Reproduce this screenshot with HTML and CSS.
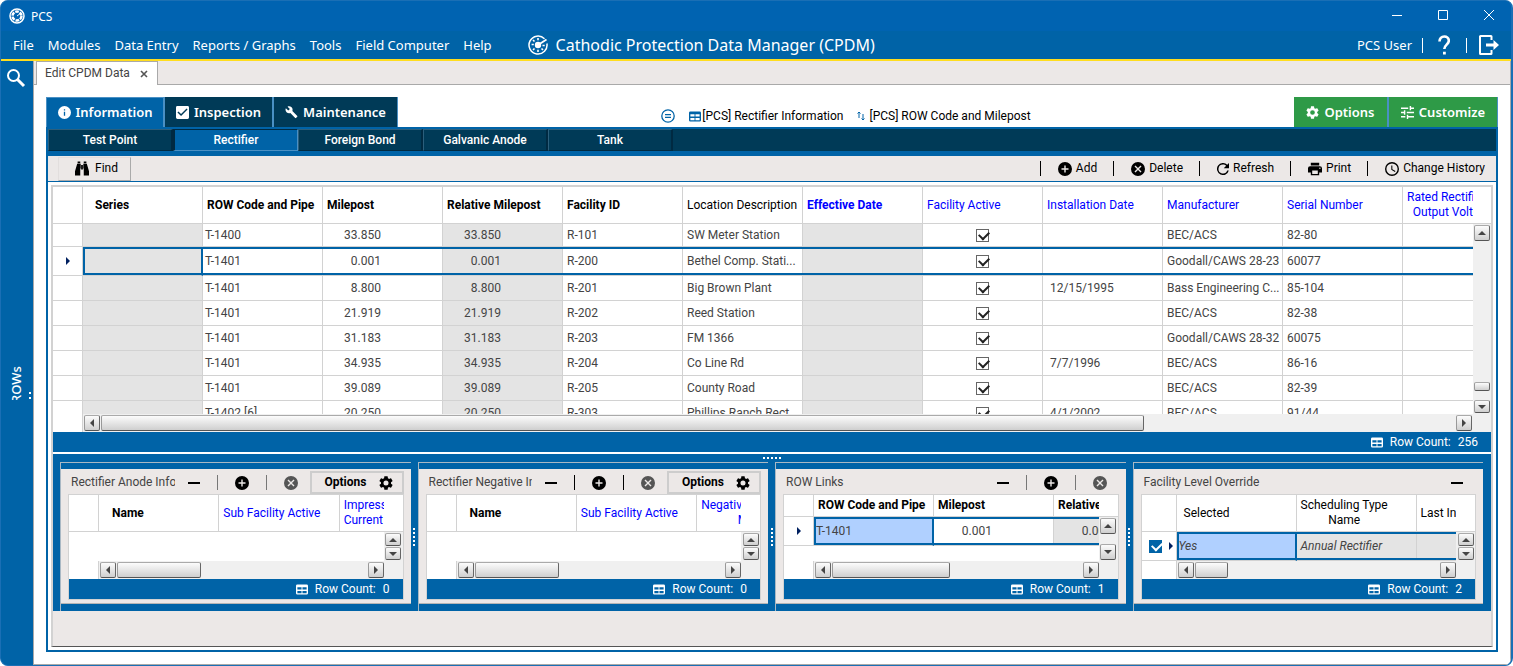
FILE: index.html
```html
<!DOCTYPE html>
<html lang="en">
<head>
    <meta charset="UTF-8">
    <meta name="viewport" content="width=device-width, initial-scale=1.0">
    <title>PCS</title>
    <link rel="stylesheet" href="styles.css">
</head>
<body>
    <!-- Shared icons -->
    <svg class="sprite" aria-hidden="true">
        <symbol id="i-search" viewBox="0 0 20 20"><circle cx="7.5" cy="7.5" r="5.5" fill="none" stroke="currentColor" stroke-width="2"/><path d="M11.5 11.5L18 18" stroke="currentColor" stroke-width="3"/></symbol>
        <symbol id="i-info" viewBox="2 2 20 20"><path d="M12 2a10 10 0 100 20 10 10 0 000-20zm1 15h-2v-6h2v6zm0-8h-2V7h2v2z"/></symbol>
        <symbol id="i-check" viewBox="3 3 18 18"><path d="M19 3H5a2 2 0 00-2 2v14a2 2 0 002 2h14a2 2 0 002-2V5a2 2 0 00-2-2zm-9 14l-5-5 1.4-1.4L10 14.2l7.600-7.600L19 8l-9 9z"/></symbol>
        <symbol id="i-wrench" viewBox="0 1 24 23"><path d="M22.700 19l-9.100-9.100c.9-2.300.4-5-1.500-6.900-2-2-5-2.400-7.400-1.300L9 6 6 9 1.600 4.700C.4 7.100.9 10.100 2.900 12.100c1.900 1.900 4.600 2.400 6.900 1.500l9.100 9.100c.4.4 1 .4 1.400 0l2.300-2.300c.5-.4.5-1.100.1-1.400z"/></symbol>
        <symbol id="i-gear" viewBox="2 2 20 20"><path d="M19.140 12.940c.04-.3.06-.61.06-.94s-.02-.64-.07-.94l2.030-1.580c.18-.14.23-.41.12-.61l-1.920-3.320c-.12-.22-.37-.29-.59-.22l-2.390.96c-.5-.38-1.030-.7-1.620-.94l-.36-2.540A.48.480 0 0013.920 2.400h-3.840c-.24 0-.43.17-.47.41l-.36 2.540c-.59.24-1.130.57-1.620.94l-2.390-.96c-.22-.08-.47 0-.59.22L2.740 8.870c-.12.21-.08.47.12.61l2.030 1.580c-.05.3-.09.63-.09.94s.02.64.07.94l-2.030 1.580c-.18.14-.23.41-.12.61l1.920 3.320c.12.22.37.29.59.22l2.390-.96c.5.38 1.030.7 1.620.94l.36 2.540c.05.24.24.41.48.41h3.840c.24 0 .44-.17.47-.41l.36-2.540c.59-.24 1.130-.56 1.620-.94l2.390.96c.22.08.47 0 .59-.22l1.920-3.320c.12-.22.07-.47-.12-.61zM12 15.600a3.600 3.600 0 110-7.200 3.600 3.600 0 010 7.200z"/></symbol>
        <symbol id="i-tune" viewBox="3 3 18 18"><path d="M3 17v2h6v-2H3zM3 5v2h10V5H3zm10 16v-2h8v-2h-8v-2h-2v6h2zM7 9v2H3v2h4v2h2V9H7zm14 4v-2H11v2h10zm-6-4h2V7h4V5h-4V3h-2v6z"/></symbol>
        <symbol id="i-add" viewBox="2 2 20 20"><path d="M12 2a10 10 0 100 20 10 10 0 000-20zm5 11h-4v4h-2v-4H7v-2h4V7h2v4h4v2z"/></symbol>
        <symbol id="i-cancel" viewBox="2 2 20 20"><path d="M12 2a10 10 0 100 20 10 10 0 000-20zm5 13.600L15.600 17 12 13.400 8.400 17 7 15.600l3.600-3.600L7 8.400 8.400 7l3.600 3.600L15.600 7 17 8.400 13.400 12l3.600 3.600z"/></symbol>
        <symbol id="i-refresh" viewBox="4 4 16 16"><path d="M17.650 6.350A8 8 0 1019.730 14h-2.080A6 6 0 1112 6c1.660 0 3.140.69 4.220 1.780L13 11h7V4l-2.350 2.350z"/></symbol>
        <symbol id="i-print" viewBox="2 2 20 20"><path d="M19 8H5a3 3 0 00-3 3v6h4v4h12v-4h4v-6a3 3 0 00-3-3zm-3 11H8v-5h8v5zm3-7a1 1 0 110-2 1 1 0 010 2zM18 3H6v4h12V3z"/></symbol>
        <symbol id="i-clock" viewBox="2 2 20 20"><path d="M12 2a10 10 0 100 20 10 10 0 000-20zm0 18a8 8 0 110-16 8 8 0 010 16zm.5-13H11v6l5.200 3.200.8-1.300-4.500-2.700V7z"/></symbol>
        <symbol id="i-find" viewBox="0 0 16 16"><path d="M3 0h3v2H3zM10 0h3v2h-3zM2.500 2.700H6.500V8H6V16H0V11zM13.500 2.700H9.500V8h.5v8h6v-5zM7 4h2v5H7z"/></symbol>
        <symbol id="i-table" viewBox="0 0 13 11"><path d="M1.500 0h10A1.500 1.500 0 0113 1.500v8A1.500 1.500 0 0111.500 11h-10A1.500 1.500 0 010 9.500v-8A1.500 1.500 0 011.500 0zM1.500 3v2.500H6V3zM7 3v2.500h4.500V3zM1.500 7v2.500H6V7zM7 7v2.500h4.500V7z"/></symbol>
        <symbol id="i-target" viewBox="0 0 20 20"><path d="M16.500 3.800A9 9 0 1018.900 8.500" fill="none" stroke="currentColor" stroke-width="1.500"/><circle cx="10" cy="10" r="3.200"/><path d="M10 10L18.500 4.500" stroke="currentColor" stroke-width="1.800"/><path d="M10 3v2.200M10 14.800V17M3.600 9.500h2.200M14.500 10.500h2.200M5 5l1.500 1.500M5 15l1.500-1.500M13.500 13.500L15 15" stroke="currentColor" stroke-width="1.600"/></symbol>
        <symbol id="i-exit" viewBox="0 0 20 20"><path d="M12.500 5V1.500a.5.5 0 00-.5-.5H1.500a.5.5 0 00-.5.500v17a.5.5 0 00.5.500H12a.5.5 0 00.5-.500V15" fill="none" stroke="currentColor" stroke-width="2"/><path d="M7 8.500h7.500V5l5.500 5-5.500 5v-3.500H7z"/></symbol>
        <symbol id="i-up" viewBox="0 0 8 4"><path d="M0 4L4 0l4 4z"/></symbol>
        <symbol id="i-down" viewBox="0 0 8 4"><path d="M0 0l4 4 4-4z"/></symbol>
        <symbol id="i-left" viewBox="0 0 4 8"><path d="M4 0L0 4l4 4z"/></symbol>
        <symbol id="i-right" viewBox="0 0 4 8"><path d="M0 0l4 4-4 4z"/></symbol>
    </svg>

    <div class="window">
        <header class="titlebar">
            <svg class="ic16" viewBox="0 0 16 16"><circle cx="8" cy="8" r="7" fill="none" stroke="currentColor" stroke-width="1.500"/><circle cx="8" cy="8" r="4.500" fill="none" stroke="currentColor" stroke-width="2.500" stroke-dasharray="3.700 1"/><path d="M8 8l4-3" stroke="currentColor"/></svg>
            <span class="app-name">PCS</span>
            <div class="win-buttons">
                <button aria-label="Minimize"><svg viewBox="0 0 10 10"><path d="M0 5.500h10"/></svg></button>
                <button aria-label="Maximize"><svg viewBox="0 0 10 10"><path d="M.5.5h9v9h-9z"/></svg></button>
                <button aria-label="Close"><svg viewBox="0 0 10 10"><path d="M0 0l10 10M10 0L0 10"/></svg></button>
            </div>
        </header>

        <nav class="menubar">
            <a href="#">File</a>
            <a href="#">Modules</a>
            <a href="#">Data Entry</a>
            <a href="#">Reports / Graphs</a>
            <a href="#">Tools</a>
            <a href="#">Field Computer</a>
            <a href="#">Help</a>
            <h1><svg class="ic20"><use href="#i-target"/></svg>Cathodic Protection Data Manager (CPDM)</h1>
            <div class="user">
                <span>PCS User</span>
                <i class="bar"></i>
                <button aria-label="Help"><svg class="help" viewBox="0 0 12 20"><path d="M1.500 6.500C1.500 3.500 3.500 1.500 6.200 1.500s4.600 1.600 4.600 4.300C10.800 9.500 6.300 9.800 6.300 14" fill="none" stroke="currentColor" stroke-width="2.600"/><path d="M5 16.800h2.800v2.800H5z"/></svg></button>
                <i class="bar"></i>
                <button aria-label="Log out"><svg class="ic20"><use href="#i-exit"/></svg></button>
            </div>
        </nav>

        <div class="workspace">
            <aside class="sidebar">
                <button aria-label="Search"><svg class="ic20"><use href="#i-search"/></svg></button>
                <span class="rows-label">ROWs</span>
                <span class="side-grip"></span>
            </aside>

            <main>
                <div class="doc-tabs">
                    <div class="doc-tab">Edit CPDM Data <button aria-label="Close tab"><svg viewBox="0 0 8 8"><path d="M1 1l6 6M7 1L1 7" stroke="#555" stroke-width="1.600"/></svg></button></div>
                </div>

                <div class="page">
                    <div class="main-tabs">
                        <button class="tab active"><svg class="ic13"><use href="#i-info"/></svg>Information</button>
                        <button class="tab inspection"><svg class="ic13"><use href="#i-check"/></svg>Inspection</button>
                        <button class="tab maintenance"><svg class="ic13"><use href="#i-wrench"/></svg>Maintenance</button>
                        <div class="layout-info">
                            <svg class="filter" viewBox="0 0 14 14"><circle cx="7" cy="7" r="6.200"/><path d="M4 5.700h6M4 8.300h6"/></svg>
                            <span><svg class="table-ic"><use href="#i-table"/></svg>[PCS] Rectifier Information</span>
                            <span class="sort"><svg viewBox="0 0 8 10"><path d="M2 7V1M.5 2.500L2 1l1.500 1.500M6 3v6M4.500 7.500L6 9l1.500-1.500"/></svg>[PCS] ROW Code and Milepost</span>
                        </div>
                        <button class="tab green options"><svg class="ic13"><use href="#i-gear"/></svg>Options</button>
                        <button class="tab green customize"><svg class="ic13"><use href="#i-tune"/></svg>Customize</button>
                    </div>

                    <div class="frame">
                        <div class="sub-tabs">
                            <button>Test Point</button>
                            <button class="active">Rectifier</button>
                            <button>Foreign Bond</button>
                            <button>Galvanic Anode</button>
                            <button>Tank</button>
                        </div>

                        <div class="toolbar">
                            <button class="find"><svg><use href="#i-find"/></svg>Find</button>
                            <i class="bar"></i>
                            <button><svg class="ic14"><use href="#i-add"/></svg>Add</button>
                            <i class="bar"></i>
                            <button><svg class="ic14"><use href="#i-cancel"/></svg>Delete</button>
                            <i class="bar"></i>
                            <button><svg class="ic12"><use href="#i-refresh"/></svg>Refresh</button>
                            <i class="bar"></i>
                            <button><svg class="ic14"><use href="#i-print"/></svg>Print</button>
                            <i class="bar"></i>
                            <button><svg class="ic14"><use href="#i-clock"/></svg>Change History</button>
                        </div>

                        <div class="content">
                            <section class="grid main-grid">
                                <div class="grid-view">
                                    <div class="viewport">
                                        <table>
                                            <colgroup><col class="c-head"><col span="11"><col></colgroup>
                                            <thead>
                                                <tr>
                                                    <th></th><th class="b indent">Series</th><th class="b">ROW Code and Pipe</th><th class="b">Milepost</th><th class="b">Relative Milepost</th><th class="b">Facility ID</th><th>Location Description</th><th class="b blue">Effective Date</th><th class="blue">Facility Active</th><th class="blue">Installation Date</th><th class="blue">Manufacturer</th><th class="blue">Serial Number</th><th class="blue"><span class="two">Rated Rectifier<br>Output Volts</span></th>
                                                </tr>
                                            </thead>
                                            <tbody>
                                                <tr class="first"><td></td><td class="ro"></td><td class="code">T-1400</td><td class="num">33.850</td><td class="num ro">33.850</td><td>R-101</td><td>SW Meter Station</td><td class="ro"></td><td class="tick"><input type="checkbox" aria-label="Facility active" checked></td><td class="date"></td><td>BEC/ACS</td><td>82-80</td><td></td></tr>
                                                <tr class="current"><td class="mark"><svg><use href="#i-right"/></svg></td><td class="ro focus"></td><td class="code">T-1401</td><td class="num">0.001</td><td class="num ro">0.001</td><td>R-200</td><td>Bethel Comp. Stati...</td><td class="ro"></td><td class="tick"><input type="checkbox" aria-label="Facility active" checked></td><td class="date"></td><td>Goodall/CAWS 28-23</td><td>60077</td><td></td></tr>
                                                <tr><td></td><td class="ro"></td><td class="code">T-1401</td><td class="num">8.800</td><td class="num ro">8.800</td><td>R-201</td><td>Big Brown Plant</td><td class="ro"></td><td class="tick"><input type="checkbox" aria-label="Facility active" checked></td><td class="date">12/15/1995</td><td>Bass Engineering C...</td><td>85-104</td><td></td></tr>
                                                <tr><td></td><td class="ro"></td><td class="code">T-1401</td><td class="num">21.919</td><td class="num ro">21.919</td><td>R-202</td><td>Reed Station</td><td class="ro"></td><td class="tick"><input type="checkbox" aria-label="Facility active" checked></td><td class="date"></td><td>BEC/ACS</td><td>82-38</td><td></td></tr>
                                                <tr><td></td><td class="ro"></td><td class="code">T-1401</td><td class="num">31.183</td><td class="num ro">31.183</td><td>R-203</td><td>FM 1366</td><td class="ro"></td><td class="tick"><input type="checkbox" aria-label="Facility active" checked></td><td class="date"></td><td>Goodall/CAWS 28-32</td><td>60075</td><td></td></tr>
                                                <tr><td></td><td class="ro"></td><td class="code">T-1401</td><td class="num">34.935</td><td class="num ro">34.935</td><td>R-204</td><td>Co Line Rd</td><td class="ro"></td><td class="tick"><input type="checkbox" aria-label="Facility active" checked></td><td class="date">7/7/1996</td><td>BEC/ACS</td><td>86-16</td><td></td></tr>
                                                <tr><td></td><td class="ro"></td><td class="code">T-1401</td><td class="num">39.089</td><td class="num ro">39.089</td><td>R-205</td><td>County Road</td><td class="ro"></td><td class="tick"><input type="checkbox" aria-label="Facility active" checked></td><td class="date"></td><td>BEC/ACS</td><td>82-39</td><td></td></tr>
                                                <tr><td></td><td class="ro"></td><td class="code">T-1402 [6]</td><td class="num">20.250</td><td class="num ro">20.250</td><td>R-303</td><td>Phillips Ranch Rect...</td><td class="ro"></td><td class="tick"><input type="checkbox" aria-label="Facility active" checked></td><td class="date">4/1/2002</td><td>BEC/ACS</td><td>91/44</td><td></td></tr>
                                            </tbody>
                                        </table>
                                    </div>
                                    <div class="vscroll"><button aria-label="Scroll up"><svg><use href="#i-up"/></svg></button><span class="thumb"></span><button aria-label="Scroll down"><svg><use href="#i-down"/></svg></button></div>
                                </div>
                                <div class="hscroll"><button aria-label="Scroll left"><svg><use href="#i-left"/></svg></button><div class="track"><span class="thumb"></span></div><button aria-label="Scroll right"><svg><use href="#i-right"/></svg></button></div>
                                <div class="row-count"><svg class="table-ic"><use href="#i-table"/></svg><span>Row Count:</span><span>256</span></div>
                            </section>

                            <div class="splitter"><i class="grip"></i></div>

                            <div class="panels">
                                <section class="panel">
                                    <div class="panel-box">
                                        <div class="panel-head gray-bars">
                                            <h2>Rectifier Anode Information</h2>
                                            <button class="minus" aria-label="Collapse"></button>
                                            <i class="bar"></i>
                                            <button aria-label="Add"><svg class="ic14"><use href="#i-add"/></svg></button>
                                            <i class="bar"></i>
                                            <button class="off" aria-label="Delete" disabled><svg class="ic14"><use href="#i-cancel"/></svg></button>
                                            <button class="panel-options">Options<svg class="ic14"><use href="#i-gear"/></svg></button>
                                        </div>
                                        <div class="grid">
                                            <div class="grid-view">
                                                <div class="viewport">
                                                    <table>
                                                        <colgroup><col class="c-head"><col span="3"></colgroup>
                                                        <thead><tr><th></th><th class="b name">Name</th><th class="blue">Sub Facility Active</th><th class="blue"><span class="two start">Impressed<br>Current</span></th></tr></thead>
                                                    </table>
                                                </div>
                                                <div class="vscroll"><button aria-label="Scroll up"><svg><use href="#i-up"/></svg></button><button aria-label="Scroll down"><svg><use href="#i-down"/></svg></button></div>
                                            </div>
                                            <div class="hscroll"><button aria-label="Scroll left"><svg><use href="#i-left"/></svg></button><div class="track"><span class="thumb w-third"></span></div><button aria-label="Scroll right"><svg><use href="#i-right"/></svg></button></div>
                                            <div class="row-count"><svg class="table-ic"><use href="#i-table"/></svg><span>Row Count:</span><span>0</span></div>
                                        </div>
                                    </div>
                                </section>
                                <div class="divider"><i class="grip"></i></div>

                                <section class="panel">
                                    <div class="panel-box">
                                        <div class="panel-head">
                                            <h2>Rectifier Negative Information</h2>
                                            <button class="minus" aria-label="Collapse"></button>
                                            <i class="bar"></i>
                                            <button aria-label="Add"><svg class="ic14"><use href="#i-add"/></svg></button>
                                            <i class="bar"></i>
                                            <button class="off" aria-label="Delete" disabled><svg class="ic14"><use href="#i-cancel"/></svg></button>
                                            <button class="panel-options">Options<svg class="ic14"><use href="#i-gear"/></svg></button>
                                        </div>
                                        <div class="grid">
                                            <div class="grid-view">
                                                <div class="viewport">
                                                    <table>
                                                        <colgroup><col class="c-head"><col span="3"></colgroup>
                                                        <thead><tr><th></th><th class="b name">Name</th><th class="blue">Sub Facility Active</th><th class="blue"><span class="two end">Negative<br>M</span></th></tr></thead>
                                                    </table>
                                                </div>
                                                <div class="vscroll"><button aria-label="Scroll up"><svg><use href="#i-up"/></svg></button><button aria-label="Scroll down"><svg><use href="#i-down"/></svg></button></div>
                                            </div>
                                            <div class="hscroll"><button aria-label="Scroll left"><svg><use href="#i-left"/></svg></button><div class="track"><span class="thumb w-third"></span></div><button aria-label="Scroll right"><svg><use href="#i-right"/></svg></button></div>
                                            <div class="row-count"><svg class="table-ic"><use href="#i-table"/></svg><span>Row Count:</span><span>0</span></div>
                                        </div>
                                    </div>
                                </section>
                                <div class="divider"><i class="grip"></i></div>

                                <section class="panel">
                                    <div class="panel-box">
                                        <div class="panel-head gray-bars">
                                            <h2>ROW Links</h2>
                                            <button class="minus" aria-label="Collapse"></button>
                                            <i class="bar"></i>
                                            <button aria-label="Add"><svg class="ic14"><use href="#i-add"/></svg></button>
                                            <i class="bar"></i>
                                            <button class="off" aria-label="Delete" disabled><svg class="ic14"><use href="#i-cancel"/></svg></button>
                                        </div>
                                        <div class="grid short-head">
                                            <div class="grid-view">
                                                <div class="viewport">
                                                    <table>
                                                        <colgroup><col class="c-head"><col span="3"></colgroup>
                                                        <thead><tr><th></th><th class="b">ROW Code and Pipe</th><th class="b">Milepost</th><th class="b">Relative Milepost</th></tr></thead>
                                                        <tbody><tr class="current"><td class="mark"><svg><use href="#i-right"/></svg></td><td class="code picked">T-1401</td><td class="num">0.001</td><td class="num ro">0.001</td></tr></tbody>
                                                    </table>
                                                </div>
                                                <div class="vscroll"><button aria-label="Scroll up"><svg><use href="#i-up"/></svg></button><button aria-label="Scroll down"><svg><use href="#i-down"/></svg></button></div>
                                            </div>
                                            <div class="hscroll"><button aria-label="Scroll left"><svg><use href="#i-left"/></svg></button><div class="track"><span class="thumb w-half"></span></div><button aria-label="Scroll right"><svg><use href="#i-right"/></svg></button></div>
                                            <div class="row-count"><svg class="table-ic"><use href="#i-table"/></svg><span>Row Count:</span><span>1</span></div>
                                        </div>
                                    </div>
                                </section>
                                <div class="divider"><i class="grip"></i></div>

                                <section class="panel">
                                    <div class="panel-box">
                                        <div class="panel-head">
                                            <h2>Facility Level Override</h2>
                                            <button class="minus" aria-label="Collapse"></button>
                                        </div>
                                        <div class="grid override">
                                            <div class="grid-view">
                                                <div class="viewport">
                                                    <table>
                                                        <colgroup><col class="c-head"><col span="3"></colgroup>
                                                        <thead><tr><th></th><th class="selected-col">Selected</th><th><span class="two">Scheduling Type<br>Name</span></th><th>Last Inspection</th></tr></thead>
                                                        <tbody><tr class="current"><td class="mark"><span class="mark-row"><input class="solid" type="checkbox" aria-label="Select row" checked><svg><use href="#i-right"/></svg></span></td><td class="code picked">Yes</td><td class="ro">Annual Rectifier</td><td class="ro"></td></tr></tbody>
                                                    </table>
                                                </div>
                                                <div class="vscroll"><button aria-label="Scroll up"><svg><use href="#i-up"/></svg></button><button aria-label="Scroll down"><svg><use href="#i-down"/></svg></button></div>
                                            </div>
                                            <div class="hscroll"><button aria-label="Scroll left"><svg><use href="#i-left"/></svg></button><div class="track"><span class="thumb w-small"></span></div><button aria-label="Scroll right"><svg><use href="#i-right"/></svg></button></div>
                                            <div class="row-count"><svg class="table-ic"><use href="#i-table"/></svg><span>Row Count:</span><span>2</span></div>
                                        </div>
                                    </div>
                                </section>
                            </div>
                        </div>
                    </div>
                </div>
            </main>
        </div>
    </div>
</body>
</html>
```
FILE: styles.css
```css
:root {
    --blue: #0063a7;
    --title: #0063b1;
    --navy: #003a57;
    --gray: #ece8e7;
    --line: #d2d2d2;
    --green: #2e9a47;
    --ui-font: "Noto Sans", "Open Sans", sans-serif;
}

* {
    box-sizing: border-box;
}

body {
    margin: 0;
    background: white;
    font-family: Roboto, "Noto Sans", sans-serif;
    font-size: 12px;
    line-height: 15px;
    color: #000;
}

button {
    margin: 0;
    padding: 0;
    border: none;
    background: none;
    font: inherit;
    color: inherit;
    cursor: pointer;
}

svg {
    display: block;
    flex: none;
    fill: currentColor;
}

.sprite {
    position: absolute;
    width: 0;
    height: 0;
}

.ic12 { width: 12px; height: 12px; }
.ic13 { width: 13px; height: 13px; }
.ic14 { width: 14px; height: 14px; }
.ic16 { width: 16px; height: 16px; }
.ic20 { width: 20px; height: 20px; }

.bar {
    width: 1px;
    height: 15px;
    background: currentColor;
}

.window {
    display: flex;
    flex-direction: column;
    min-height: 100vh;
    background: var(--blue);
    border: 1px solid #1a6fb5;
    border-width: 1px 2px 1px 1px;
    border-radius: 8px;
    overflow: hidden;
}

/* Title bar */
.titlebar {
    display: flex;
    align-items: center;
    height: 30px;
    padding-left: 8px;
    background: var(--title);
    color: white;
    font-family: var(--ui-font);
}

.app-name {
    margin-left: 6px;
}

.win-buttons {
    display: flex;
    margin-left: auto;
}

.win-buttons button {
    width: 46px;
    height: 30px;
    padding: 9px 17px 11px 19px;
}

.win-buttons svg {
    width: 10px;
    height: 10px;
    fill: none;
    stroke: white;
}

/* Menu */
.menubar {
    display: flex;
    align-items: center;
    gap: 14px;
    height: 30px;
    padding: 0 12px 0 12px;
    border-bottom: 2px solid #ffdd1f;
    color: white;
    font-family: var(--ui-font);
    font-size: 13px;
    line-height: 18px;
}

.menubar a {
    color: white;
    text-decoration: none;
}

.menubar h1 {
    display: flex;
    align-items: center;
    gap: 8px;
    margin: 0 0 0 22px;
    font-size: 16px;
    font-weight: normal;
}

.user {
    display: flex;
    align-items: center;
    margin-left: auto;
}

.user .bar {
    margin: 0 12px 0 10px;
}

.user .bar + button {
    margin-left: 3px;
}

.user .bar + button:last-child {
    margin-left: 0;
}

.help {
    width: 12px;
    height: 20px;
    margin-right: 6px;
}

/* Side bar */
.workspace {
    display: flex;
    flex: 1;
}

.sidebar {
    display: flex;
    flex-direction: column;
    align-items: center;
    width: 32px;
    padding: 7px 2px 0 0;
    color: white;
}

.rows-label {
    height: 34px;
    margin-top: 278px;
    overflow: hidden;
    writing-mode: vertical-rl;
    transform: rotate(180deg);
    direction: rtl;
    font-family: var(--ui-font);
    font-size: 13px;
    font-weight: 500;
}

.side-grip {
    align-self: flex-end;
    width: 2px;
    height: 7px;
    margin-top: -8px;
    border: solid white;
    border-width: 2px 0;
}

main {
    display: flex;
    flex: 1;
    flex-direction: column;
    min-width: 0;
    background: white;
    border: 1px solid #a9a9a9;
    border-top: none;
}

.doc-tabs {
    display: flex;
    height: 24px;
    padding-left: 2px;
    background: var(--gray);
    border-bottom: 1px solid #a9a9a9;
}

.doc-tab {
    display: flex;
    align-items: center;
    gap: 10px;
    height: 24px;
    padding: 0 9px 0 8px;
    background: white;
    border: 1px solid #a9a9a9;
    border-bottom: none;
    color: #444;
}

.doc-tab svg {
    width: 8px;
    height: 8px;
}

.page {
    display: flex;
    flex: 1;
    flex-direction: column;
    padding: 12px;
}

/* Main tabs */
.main-tabs {
    display: flex;
}

.tab {
    display: flex;
    align-items: center;
    justify-content: center;
    gap: 5px;
    height: 30px;
    border: solid #4a90c4;
    border-width: 0 1px 0 0;
    background: var(--navy);
    color: white;
    font-family: var(--ui-font);
    font-size: 13px;
    font-weight: 600;
}

.tab.active {
    width: 119px;
    border-width: 1px 2px 0 1px;
    background: var(--blue);
}

.tab.inspection { width: 109px; border-right-width: 2px; }
.tab.maintenance { width: 124px; }
.tab.green { background: var(--green); }
.tab.options { width: 95px; border-right-width: 2px; }
.tab.customize { width: 109px; }

.layout-info {
    display: flex;
    flex: 1;
    align-items: center;
    justify-content: center;
    gap: 14px;
    padding-top: 8px;
}

.layout-info span {
    display: flex;
    align-items: center;
    gap: 1px;
}

.layout-info svg {
    color: var(--blue);
}

.layout-info .filter {
    width: 14px;
    height: 14px;
    fill: none;
    stroke: var(--blue);
    stroke-width: 1.3;
}

.layout-info .sort {
    gap: 4px;
}

.sort svg {
    width: 8px;
    height: 10px;
    fill: none;
    stroke: var(--blue);
}

.table-ic {
    width: 12px;
    height: 11px;
}

/* Frame */
.frame {
    display: flex;
    flex: 1;
    flex-direction: column;
    border: 2px solid var(--blue);
}

.sub-tabs {
    display: flex;
    height: 22px;
    box-sizing: content-box;
    background: var(--navy);
    border-bottom: 5px solid var(--blue);
}

.sub-tabs button {
    width: 125px;
    height: 22px;
    border: 1px solid #2c5f7c;
    border-right: 2px solid #002a42;
    border-bottom-color: #002a42;
    color: white;
    font-weight: 500;
}

.sub-tabs button.active {
    background: var(--blue);
    border: 1px solid #4a90c4;
    border-top-color: #002a42;
    border-left: 2px solid #002a42;
}

.toolbar {
    display: flex;
    align-items: center;
    height: 26px;
    padding: 0 11px 0 10px;
    background: var(--gray);
    border-bottom: 1px solid var(--blue);
}

.toolbar button {
    display: flex;
    align-items: center;
    gap: 4px;
    margin: 0 16px 0 17px;
}

.toolbar button:last-child {
    margin-right: 0;
}

.toolbar .find {
    gap: 6px;
    height: 24px;
    margin: 0 auto 0 0;
    padding: 0 12px 0 16px;
    border: 1px solid #f4f2f1;
    border-color: #e2dedd #aaa #aaa #e2dedd;
}

.find svg {
    width: 14px;
    height: 15px;
}

.content {
    display: flex;
    flex: 1;
    flex-direction: column;
    margin: 3px;
    border: 2px solid var(--line);
    border-bottom: 1px solid #555;
    background: var(--gray);
}

/* Grids */
.grid {
    background: white;
}

.grid-view {
    display: flex;
    height: 66px;
}

.main-grid .grid-view {
    height: 227px;
}

.viewport {
    flex: 1;
    min-width: 0;
    overflow: hidden;
}

table {
    width: 391px;
    table-layout: fixed;
    border-spacing: 0;
}

.main-grid table {
    width: 1471px;
}

col {
    width: 120px;
}

.c-head {
    width: 30px;
}

th,
td {
    height: 25px;
    padding: 0 0 0 4px;
    overflow: hidden;
    border: solid var(--line);
    border-width: 0 1px 1px 0;
    text-align: left;
    white-space: nowrap;
}

th {
    height: 37px;
    font-weight: normal;
    color: #000;
}

td {
    color: #444;
}

th.b { font-weight: 700; }
th.blue { color: #00f; }
th.indent { padding-left: 12px; }
th.name { padding-left: 13px; }

.two {
    display: inline-block;
    text-align: center;
}

.two.start {
    text-align: left;
}

.two.end {
    text-align: right;
}

.first td { height: 23px; }
td.code { padding-left: 2px; }
td.date { padding-left: 7px; }
td.ro { background: #e4e4e4; }

td.num {
    padding-right: 61px;
    padding-left: 0;
    text-align: right;
}

td.tick,
td.mark {
    padding: 0;
    text-align: center;
}

.current {
    position: relative;
}

.current td {
    height: 29px;
}

.current::after {
    content: "";
    position: absolute;
    top: 0;
    right: 0;
    bottom: 1px;
    left: 30px;
    border: 2px solid var(--blue);
    pointer-events: none;
}

.focus,
.picked {
    border-right: 2px solid var(--blue);
}

td.picked {
    background: #b0d0ff;
}

.mark svg {
    width: 4px;
    height: 8px;
    margin: 0 auto;
    color: #002060;
}

input[type="checkbox"] {
    position: relative;
    display: block;
    width: 13px;
    height: 13px;
    margin: 0 auto;
    appearance: none;
    border: 1px solid #666;
    background: white;
}

input[type="checkbox"]::after {
    content: "";
    position: absolute;
    top: 1px;
    left: 2px;
    width: 8px;
    height: 5px;
    border: solid #222;
    border-width: 0 0 2px 2px;
    transform: rotate(-45deg);
}

input.solid[type="checkbox"] {
    border-color: var(--blue);
    background: var(--blue);
}

input.solid[type="checkbox"]::after {
    border-color: white;
}

/* Scroll bars */
.vscroll {
    display: flex;
    flex-direction: column;
    align-items: center;
    justify-content: space-between;
    width: 18px;
    padding: 1px 0;
    margin-top: 36px;
    background: #f0f0f0;
    border-top: 1px solid var(--line);
}

.panel .vscroll {
    width: 19px;
}

.main-grid .vscroll .thumb {
    width: 16px;
    height: 9px;
    margin-top: auto;
    margin-bottom: 9px;
}

.vscroll button,
.hscroll button,
.thumb {
    border: 1px solid #888;
    border-color: #aaa #666 #555 #999;
    border-radius: 2px;
    background: linear-gradient(#fcfcfc, #cfcfcf);
}

.vscroll button,
.hscroll button {
    display: flex;
    align-items: center;
    justify-content: center;
    width: 16px;
    height: 16px;
    color: #444;
}

.vscroll button {
    height: 13px;
}

.main-grid .vscroll button:first-child,
.short-head .vscroll button {
    height: 16px;
}

.vscroll svg { width: 8px; height: 4px; }
.hscroll svg { width: 4px; height: 8px; }

.hscroll {
    display: flex;
    align-items: center;
    gap: 1px;
    height: 18px;
    margin-left: 30px;
    padding: 0 19px 0 1px;
    background: #f0f0f0;
    box-shadow: -1px 0 0 var(--line);
}

.track {
    flex: 1;
}

.thumb {
    display: block;
    height: 16px;
}

.track .thumb { width: 77%; }
.track .w-third { width: 84px; }
.track .w-half { width: 118px; }
.track .w-small { width: 33px; }

.row-count {
    display: flex;
    align-items: center;
    justify-content: flex-end;
    gap: 7px;
    height: 20px;
    padding-right: 13px;
    background: var(--blue);
    color: white;
}

/* Lower panels */
.splitter {
    display: flex;
    align-items: center;
    justify-content: center;
    height: 10px;
    background: var(--blue);
    border-top: 2px solid white;
}

.grip {
    width: 18px;
    height: 2px;
    background: repeating-linear-gradient(90deg, white 0 2px, transparent 2px 4px);
}

.divider .grip {
    width: 2px;
    height: 18px;
    background: repeating-linear-gradient(white 0 2px, transparent 2px 4px);
}

.panels {
    display: flex;
    padding: 0 8px 0 7px;
    background: var(--blue);
}

.panel {
    flex: 1;
    min-width: 0;
    padding: 6px 0 7px;
    border: solid #a9b8c4;
    border-width: 1px 0 0 1px;
}

.divider {
    display: flex;
    align-items: center;
    justify-content: center;
    width: 7px;
}

.panel-box {
    padding: 2px 7px 3px;
    background: var(--gray);
    border-bottom: 1px solid #b5b5b5;
}

.panel-head {
    display: flex;
    align-items: center;
    height: 23px;
    padding-left: 3px;
}

.panel-head h2 {
    flex: 1;
    margin: 0 13px 0 0;
    overflow: hidden;
    font-size: 12px;
    font-weight: normal;
    color: #444;
    white-space: nowrap;
}

.panel-head .bar {
    margin: 0 17px;
}

.gray-bars .bar {
    background: #777;
}

.minus {
    width: 12px;
    height: 2px;
    background: #000;
}

.panel-head .minus:last-child {
    margin-right: 13px;
}

.off {
    margin-right: 12px;
    color: #555;
}

.panel-options {
    display: flex;
    align-items: center;
    justify-content: space-between;
    width: 94px;
    height: 23px;
    padding: 0 9px 0 13px;
    border: 2px solid #cdcdcd;
    font-weight: 700;
}

.panel .grid {
    border: 1px solid var(--line);
}

.short-head th { height: 22px; }
.short-head .vscroll { margin-top: 21px; }

.override .c-head { width: 35px; }
.override table { width: 396px; }
.override .selected-col { padding-left: 7px; }
.override .current::after { left: 35px; }
.override .hscroll { margin-left: 35px; }

.override td {
    font-style: italic;
}

.mark-row {
    display: flex;
    align-items: center;
    justify-content: flex-end;
    gap: 7px;
    padding-right: 3px;
}

.mark-row input[type="checkbox"],
.mark-row svg {
    margin: 0;
}
```
